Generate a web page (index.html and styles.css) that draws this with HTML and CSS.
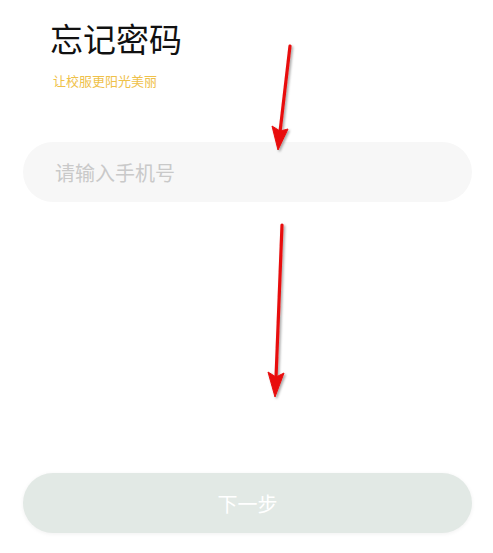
FILE: index.html
```html
<!DOCTYPE html>
<html lang="zh">
<head>
<meta charset="utf-8">
<title>忘记密码</title>
<link rel="stylesheet" href="styles.css">
</head>
<body>
<main class="page">
  <header class="head">
    <h1 class="title">忘记密码</h1>
    <p class="sub">让校服更阳光美丽</p>
  </header>
  <div class="field">
    <input class="input" type="text" placeholder="请输入手机号">
  </div>
  <button class="next" type="button">下一步</button>
  <svg class="arrows" width="493" height="553" viewBox="0 0 493 553" aria-hidden="true">
    <defs>
      <filter id="sh" x="-50%" y="-10%" width="200%" height="120%">
        <feDropShadow dx="1.5" dy="1.5" stdDeviation="1.2" flood-color="#000" flood-opacity="0.35"/>
      </filter>
    </defs>
    <g filter="url(#sh)" fill="#e81010" stroke="#e81010">
      <line x1="290" y1="46" x2="280" y2="132" stroke-width="3.2" stroke-linecap="round"/>
      <polygon points="272,126 280,131 288,129 278,150" stroke-width="1"/>
      <line x1="282" y1="225" x2="276" y2="378" stroke-width="3.2" stroke-linecap="round"/>
      <polygon points="268,372 276,377 284,373 275,397" stroke-width="1"/>
    </g>
  </svg>
</main>
</body>
</html>
```
FILE: styles.css
```css
html, body {
  margin: 0;
  padding: 0;
  background: #ffffff;
}
body {
  font-family: "Noto Sans CJK SC", "Noto Sans", sans-serif;
}
.page {
  position: relative;
  width: 493px;
  height: 553px;
  box-sizing: border-box;
  padding: 18px 21px 0 23px;
  display: flex;
  flex-direction: column;
  overflow: hidden;
}
.head {
  padding-left: 27px;
}
.title {
  margin: 0;
  font-size: 33px;
  line-height: 40px;
  font-weight: 400;
  color: #111111;
}
.sub {
  margin: 15px 0 0 3px;
  font-size: 13px;
  line-height: 16px;
  color: #efc14a;
}
.field {
  margin-top: 53px;
}
.input {
  display: block;
  width: 100%;
  height: 60px;
  box-sizing: border-box;
  border: none;
  outline: none;
  border-radius: 30px;
  background: #f7f7f7;
  padding: 0 0 0 32px;
  font-family: inherit;
  font-size: 20px;
  color: #333;
}
.input::placeholder {
  color: #c9c9c9;
}
.next {
  margin-top: 271px;
  width: 100%;
  height: 60px;
  border: none;
  border-radius: 30px;
  background: #e2e9e5;
  color: #ffffff;
  font-family: inherit;
  font-size: 20px;
  box-shadow: 0 1px 4px rgba(0, 0, 0, 0.06);
}
.arrows {
  position: absolute;
  left: 0;
  top: 0;
  pointer-events: none;
}
```
